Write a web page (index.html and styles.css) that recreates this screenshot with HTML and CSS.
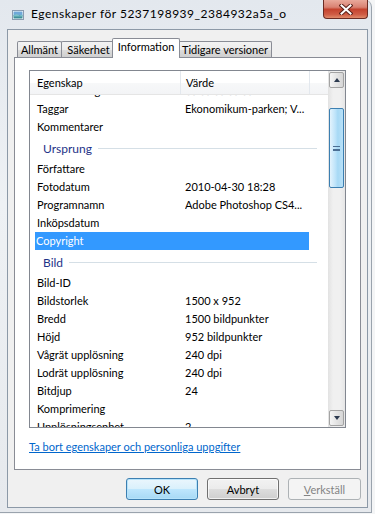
FILE: index.html
```html
<!DOCTYPE html>
<html lang="sv">
<head>
    <meta charset="UTF-8">
    <meta name="viewport" content="width=device-width, initial-scale=1.0">
    <title>Egenskaper</title>
    <link rel="stylesheet" href="styles.css">
</head>
<body>
    <div class="window">
        <div class="titlebar">
            <svg class="app-icon" width="12" height="10" viewBox="0 0 12 10">
                <rect x="0.5" y="0.5" width="11" height="9" fill="#fff" stroke="#8a9bb0"/>
                <rect x="1.5" y="1.5" width="9" height="4" fill="#6fa8d8"/>
                <rect x="1.5" y="5" width="9" height="3.5" fill="#3f8f9a"/>
                <path d="M1.5 5.5 L4.5 4 L7.5 5.5 L10.5 4.5 L10.5 6.5 L1.5 6.5 Z" fill="#7cc0c8"/>
            </svg>
            <span class="title">Egenskaper för 5237198939_2384932a5a_o</span>
            <div class="close">
                <svg width="14" height="11" viewBox="0 0 14 11">
                    <path d="M2.5 1.5 L11.5 9.5 M11.5 1.5 L2.5 9.5" stroke="#5a2018" stroke-width="4" stroke-linecap="square"/>
                    <path d="M2.5 1.5 L11.5 9.5 M11.5 1.5 L2.5 9.5" stroke="#fff" stroke-width="2" stroke-linecap="square"/>
                </svg>
            </div>
        </div>
        <div class="client">
            <div class="tabs">
                <div class="tab tab-general">Allmänt</div>
                <div class="tab tab-security">Säkerhet</div>
                <div class="tab tab-info active">Information</div>
                <div class="tab tab-history">Tidigare versioner</div>
            </div>
            <div class="page">
                <div class="listview">
                    <div class="lv-main">
                        <div class="lv-header">
                            <div class="hcol hcol-name">Egenskap</div>
                            <div class="hcol hcol-value">Värde</div>
                            <div class="hcol hcol-rest"></div>
                        </div>
                        <div class="lv-body">
                            <div class="lv-rows">
                                <div class="row"><span class="name">Klassificering</span><span class="value stars">★★★★★</span></div>
                                <div class="row"><span class="name">Taggar</span><span class="value">Ekonomikum-parken; V...</span></div>
                                <div class="row"><span class="name">Kommentarer</span><span class="value"></span></div>
                                <div class="group"><span>Ursprung</span></div>
                                <div class="row"><span class="name">Författare</span><span class="value"></span></div>
                                <div class="row"><span class="name">Fotodatum</span><span class="value">2010-04-30 18:28</span></div>
                                <div class="row"><span class="name">Programnamn</span><span class="value">Adobe Photoshop CS4...</span></div>
                                <div class="row"><span class="name">Inköpsdatum</span><span class="value"></span></div>
                                <div class="row selected"><span class="name">Copyright</span><span class="value"></span></div>
                                <div class="group"><span>Bild</span></div>
                                <div class="row"><span class="name">Bild-ID</span><span class="value"></span></div>
                                <div class="row"><span class="name">Bildstorlek</span><span class="value">1500 x 952</span></div>
                                <div class="row"><span class="name">Bredd</span><span class="value">1500 bildpunkter</span></div>
                                <div class="row"><span class="name">Höjd</span><span class="value">952 bildpunkter</span></div>
                                <div class="row"><span class="name">Vågrät upplösning</span><span class="value">240 dpi</span></div>
                                <div class="row"><span class="name">Lodrät upplösning</span><span class="value">240 dpi</span></div>
                                <div class="row"><span class="name">Bitdjup</span><span class="value">24</span></div>
                                <div class="row"><span class="name">Komprimering</span><span class="value"></span></div>
                                <div class="row"><span class="name">Upplösningsenhet</span><span class="value">2</span></div>
                            </div>
                        </div>
                    </div>
                    <div class="scrollbar">
                        <div class="sb-btn"><span class="arrow-up"></span></div>
                        <div class="sb-track">
                            <div class="sb-thumb"><span class="grip"></span></div>
                        </div>
                        <div class="sb-btn"><span class="arrow-down"></span></div>
                    </div>
                </div>
                <a class="link" href="#">Ta bort egenskaper och personliga uppgifter</a>
            </div>
            <div class="buttons">
                <button class="btn default">OK</button>
                <button class="btn">Avbryt</button>
                <button class="btn" disabled><u>V</u>erkställ</button>
            </div>
        </div>
    </div>
</body>
</html>
```

FILE: styles.css
```css
body {
    margin: 0;
    background-color: #f4f5f6;
    font-family: Lato, "Liberation Sans", sans-serif;
    font-size: 11px;
    color: #000;
}
.window {
    width: 372px;
    height: 513px;
    box-sizing: border-box;
    padding: 0 3px 5px 7px;
    background: linear-gradient(to bottom, #e3e8ee, #eef1f4 40%, #e6e9ed);
    border-right: 1px solid #9aa3ad;
    border-bottom: 1px solid #9aa3ad;
    border-radius: 0 7px 0 0;
    display: flex;
    flex-direction: column;
}
.titlebar {
    height: 29px;
    display: flex;
    align-items: flex-start;
    flex-shrink: 0;
}
.app-icon {
    margin: 10px 0 0 5px;
}
.title {
    margin: 6px 0 0 7px;
    line-height: 16px;
    font-size: 12px;
    letter-spacing: 0.5px;
    color: #000;
    flex: 1;
}
.close {
    width: 45px;
    height: 19px;
    box-sizing: border-box;
    border: 1px solid #6b2c24;
    border-top: none;
    border-radius: 0 0 4px 4px;
    background: linear-gradient(to bottom, #e9a99b, #d98272 40%, #c4432e 52%, #cf5c45 80%, #e08a6a);
    display: flex;
    justify-content: center;
    align-items: center;
}
.client {
    flex: 1;
    border: 1px solid #8c99a7;
    background-color: #f0f0f0;
    padding: 8px 6px 7px 6px;
    display: flex;
    flex-direction: column;
}
.tabs {
    display: flex;
    align-items: flex-end;
    height: 19px;
    padding-left: 3px;
}
.tab {
    height: 16px;
    line-height: 15px;
    text-align: center;
    border: 1px solid #898c95;
    border-bottom: none;
    margin-right: -1px;
    background: linear-gradient(to bottom, #f3f3f3, #ebebeb 50%, #dddddd 51%, #cfcfcf);
    border-radius: 2px 2px 0 0;
    box-sizing: border-box;
    white-space: nowrap;
}
.tab-general {
    width: 45px;
}
.tab-security {
    width: 55px;
}
.tab-info {
    width: 63px;
}
.tab-history {
    width: 94px;
}
.tab.active {
    width: 68px;
    height: 20px;
    margin: 0 -2px -1px -3px;
    line-height: 16px;
    background: #fff;
    position: relative;
    z-index: 1;
}
.page {
    height: 413px;
    box-sizing: border-box;
    border: 1px solid #898c95;
    background-color: #fff;
    padding: 12px 14px 0 14px;
}
.listview {
    width: 317px;
    height: 358px;
    box-sizing: border-box;
    border: 1px solid #828790;
    display: flex;
}
.lv-main {
    width: 298px;
    display: flex;
    flex-direction: column;
}
.lv-header {
    height: 24px;
    display: flex;
    background: linear-gradient(to bottom, #fff, #fff 50%, #f7f8f9 51%, #f3f4f6);
    border-bottom: 1px solid #e5e5e5;
    box-sizing: border-box;
}
.hcol {
    line-height: 24px;
    border-right: 1px solid #e3e8ee;
    box-sizing: border-box;
}
.hcol-name {
    width: 151px;
    padding-left: 7px;
}
.hcol-value {
    width: 129px;
    padding-left: 5px;
}
.hcol-rest {
    flex: 1;
    border-right: none;
}
.lv-body {
    flex: 1;
    overflow: hidden;
}
.lv-rows {
    margin-top: -13px;
}
.row {
    display: flex;
    height: 18px;
    line-height: 18px;
    width: 274px;
    margin-left: 5px;
    white-space: nowrap;
}
.row .name {
    width: 148px;
    padding-left: 2px;
}
.row .value {
    flex: 1;
    overflow: hidden;
}
.row .stars {
    color: #d4d4d4;
    font-size: 14px;
    letter-spacing: 1px;
}
.row.selected {
    background-color: #3399ff;
    color: #fff;
}
.row.selected .name {
    padding-left: 1px;
    width: 149px;
}
.group {
    height: 24px;
    width: 282px;
    margin-left: 5px;
    display: flex;
    align-items: center;
    padding-left: 8px;
    box-sizing: border-box;
    color: #1e3287;
    font-size: 12px;
}
.group span {
    line-height: 24px;
    padding-top: 1px;
}
.group::after {
    content: "";
    flex: 1;
    height: 1px;
    margin-left: 6px;
    background-color: #d5dfe6;
}
.scrollbar {
    width: 17px;
    box-sizing: border-box;
    padding: 1px;
    display: flex;
    flex-direction: column;
    background: linear-gradient(to right, #e2e2e2, #f0f0f0 30%, #f0f0f0 70%, #e6e6e6);
}
.sb-btn {
    height: 16px;
    box-sizing: border-box;
    border: 1px solid #a3a3a3;
    border-radius: 2px;
    background: linear-gradient(to right, #f5f5f5, #e4e4e4 50%, #d6d6d6);
    display: flex;
    justify-content: center;
    align-items: center;
}
.arrow-up {
    width: 0;
    height: 0;
    border-left: 3px solid transparent;
    border-right: 3px solid transparent;
    border-bottom: 4px solid #2c3a4f;
}
.arrow-down {
    width: 0;
    height: 0;
    border-left: 3px solid transparent;
    border-right: 3px solid transparent;
    border-top: 4px solid #2c3a4f;
}
.sb-track {
    flex: 1;
}
.sb-thumb {
    margin-top: 20px;
    height: 80px;
    box-sizing: border-box;
    border: 1px solid #3c7fb1;
    border-radius: 2px;
    background: linear-gradient(to right, #e3f3fd, #bfe4fa 40%, #a7d9f5 60%, #b9e1f8);
    display: flex;
    justify-content: center;
    align-items: center;
}
.grip {
    width: 7px;
    height: 5px;
    border-top: 1px solid #4b6f94;
    border-bottom: 1px solid #4b6f94;
    background: linear-gradient(to bottom, transparent 2px, #4b6f94 2px, #4b6f94 3px, transparent 3px);
    box-sizing: border-box;
}
.link {
    display: block;
    margin-top: 11px;
    line-height: 15px;
    color: #0066cc;
    text-decoration: underline;
}
.buttons {
    display: flex;
    justify-content: flex-end;
    gap: 9px;
    margin-top: 8px;
}
.btn {
    width: 72px;
    height: 22px;
    padding: 0;
    font-family: inherit;
    font-size: 11px;
    color: #000;
    border: 1px solid #707070;
    border-radius: 3px;
    background: linear-gradient(to bottom, #f2f2f2, #ebebeb 50%, #dddddd 51%, #cfcfcf);
    box-shadow: inset 0 0 0 1px rgba(255, 255, 255, 0.7);
}
.btn.default {
    border-color: #3c7fb1;
    background: linear-gradient(to bottom, #eaf6fd, #d9f0fc 50%, #bee6fd 51%, #a7d9f5);
    box-shadow: inset 0 0 0 1px #b6e3fb;
}
.btn:last-child {
    width: 73px;
}
.btn:disabled {
    border-color: #adb2b5;
    background: #f4f4f4;
    color: #838383;
    box-shadow: none;
}
.btn u {
    text-decoration: underline;
}
```
